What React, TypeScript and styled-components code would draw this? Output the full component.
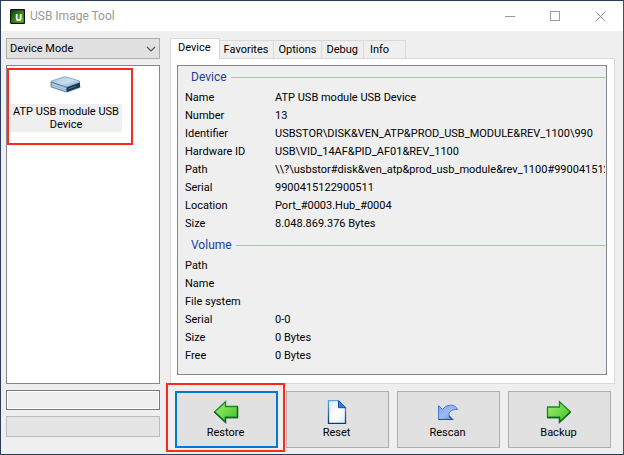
import React, { useState } from "react";
import styled, { createGlobalStyle, css } from "styled-components";

const GlobalStyle = createGlobalStyle`
  *, *::before, *::after { box-sizing: border-box; }
  body { margin: 0; background: #efefef; }
  button, input, select { font: inherit; color: inherit; margin: 0; }
`;

const Window = styled.div`
  display: flex;
  flex-direction: column;
  min-height: 100vh;
  border: 1px solid #2b3d58;
  border-right-color: #2c5676;
  background: #efefef;
  color: #000;
  font: 11px/14px Roboto, "Liberation Sans", sans-serif;
`;

const TitleBar = styled.header`
  display: flex;
  align-items: center;
  height: 30px;
  padding-left: 9px;
  background: #fff;
`;

const Title = styled.h1`
  flex: 1;
  margin: 0 0 0 5px;
  color: #999;
  font: 12px/16px Roboto, "Liberation Sans", sans-serif;
`;

const WindowButton = styled.button`
  display: grid;
  place-items: center;
  width: 45px;
  height: 30px;
  padding: 0;
  border: 0;
  background: transparent;
`;

const Body = styled.main`
  flex: 1;
  display: flex;
  gap: 10px;
  padding: 7px 8px 6px 5px;
`;

const Sidebar = styled.aside`
  display: flex;
  flex-direction: column;
  gap: 6px;
  width: 154px;
  padding-bottom: 11px;
`;

const SelectWrap = styled.div`
  display: grid;
  align-items: center;
  > * { grid-area: 1 / 1; }
  > svg { justify-self: end; margin-right: 4px; pointer-events: none; }
`;

const Select = styled.select`
  appearance: none;
  width: 100%;
  height: 21px;
  padding: 0 20px 0 3px;
  border: 1px solid #adadad;
  border-radius: 0;
  background: #e1e1e1;
`;

const DeviceList = styled.div`
  position: relative;
  flex: 1;
  padding: 10px 3px;
  border: 1px solid #828790;
  background: #fff;
`;

const DeviceItem = styled.button`
  display: flex;
  flex-direction: column;
  align-items: center;
  gap: 10px;
  width: 112px;
  padding: 0;
  border: 0;
  background: transparent;
  line-height: 13px;
`;

const DeviceName = styled.span`
  width: 100%;
  padding: 1px 0;
  background: #efefef;
`;

const Highlight = styled.span<{ $target: "device" | "action" }>`
  position: absolute;
  border: 2px solid #fb2a1c;
  pointer-events: none;
  ${({ $target }) =>
    $target === "device"
      ? css`inset: 2px 26px auto 0; height: 77px;`
      : css`inset: -8px -7px -4px -9px;`}
`;

const StatusField = styled.input`
  width: 100%;
  height: 20px;
  border: 1px solid #7a7a7a;
  border-radius: 0;
  background: #efefef;
  box-shadow: inset 0 0 0 1px #fff;
`;

const BlankButton = styled.button`
  width: 100%;
  height: 21px;
  border: 1px solid #bcbcbc;
  background: #e5e5e5;
`;

const Content = styled.section`
  flex: 1;
  min-width: 0;
  display: flex;
  flex-direction: column;
`;

const TabList = styled.div`
  display: flex;
  align-items: flex-end;
  height: 20px;
`;

const Tab = styled.button<{ $active: boolean }>`
  position: relative;
  height: 18px;
  padding: 0 5px 0 4px;
  border: 1px solid #d9d9d9;
  border-width: 1px 1px 0 0;
  background: #efefef;
  white-space: nowrap;
  &:last-child { padding: 0 16px 0 6px; }
  ${({ $active }) =>
    $active &&
    css`
      height: 21px;
      padding: 0 8px 2px 7px;
      margin-bottom: -1px;
      border-left-width: 1px;
      background: #fff;
      z-index: 1;
    `}
`;

const TabPanel = styled.div`
  flex: 1;
  display: flex;
  padding: 6px 7px 8px 6px;
  border: 1px solid #d9d9d9;
  background: #fff;
`;

const Details = styled.div`
  flex: 1;
  min-width: 0;
  padding: 2px 1px 4px 7px;
  border: 1px solid #828790;
  background: #efefef;
`;

const Group = styled.section`
  margin-bottom: 4px;
`;

const GroupTitle = styled.h2`
  display: flex;
  align-items: center;
  gap: 4px;
  height: 18px;
  margin: 0 0 2px 6px;
  color: #1a3c9f;
  font: 12px/18px Roboto, "Liberation Sans", sans-serif;
  &::after { content: ""; flex: 1; height: 1px; background: #a0b8e0; }
`;

const Properties = styled.dl`
  margin: 0;
`;

const Property = styled.div`
  display: grid;
  grid-template-columns: 90px minmax(0, 1fr);
  height: 18px;
  line-height: 20px;
  dt, dd { margin: 0; overflow: hidden; white-space: nowrap; }
`;

const Actions = styled.div`
  display: flex;
  gap: 8px;
  padding: 7px 4px 0 5px;
`;

const ActionSlot = styled.div`
  position: relative;
  flex: 1;
  display: flex;
`;

const ActionButton = styled.button<{ $primary?: boolean }>`
  flex: 1;
  display: flex;
  flex-direction: column;
  align-items: center;
  justify-content: center;
  gap: 2px;
  height: 57px;
  padding: 0 2px 0 0;
  border: ${({ $primary }) => ($primary ? "2px solid #0078d7" : "1px solid #adadad")};
  background: #e1e1e1;
`;

const AppIcon = () => (
  <svg width="15" height="15" viewBox="0 0 15 15" aria-hidden="true">
    <defs>
      <linearGradient id="app" x1="0" x2="1" y2="1">
        <stop stopColor="#083f16" />
        <stop offset="1" stopColor="#65c51c" />
      </linearGradient>
    </defs>
    <rect x=".5" y=".5" width="14" height="14" rx="1.5" fill="url(#app)" stroke="#111" strokeWidth="1.4" />
    <path d="M6.7 5v4.2q0 2 2 2t2-2V5" fill="none" stroke="#efffe5" strokeWidth="1.8" />
  </svg>
);

const DriveIcon = () => (
  <svg width="32" height="18" viewBox="0 0 32 18" aria-hidden="true">
    <defs>
      <linearGradient id="drive" x1="0" x2="1" y2="1">
        <stop stopColor="#9dbfdc" />
        <stop offset=".5" stopColor="#c9e0f2" />
        <stop offset="1" stopColor="#7fa5c7" />
      </linearGradient>
    </defs>
    <path d="M5 13l13 4 13-5V9L20 15z" fill="#b9c2ca" opacity=".6" />
    <path d="M1 5.500v5L16.500 16l13.500-4.500v-5L16.500 11z" fill="#416480" />
    <path d="M1 5.800Q1 5 3 4.500L13 1.200Q15 .7 17 1.200l12 3.600q2 .8 0 1.700l-11 4.200q-1.500.6-3 .1z" fill="url(#drive)" stroke="#6c90ae" strokeWidth=".7" />
    <path d="M1 6l15.500 5v5L1 11z" fill="#8db0cc" stroke="#4f7493" strokeWidth=".7" />
    <path d="M2 8l14 4.800M2 9.800l14 4.800" stroke="#d0e3f1" strokeWidth=".7" />
    <path d="M17 11.500L30 6.500v4.500l-13 5z" fill="#183850" />
    <path d="M18 13l8-2.800" stroke="#46718f" />
  </svg>
);

const ArrowIcon = ({ right = false }: { right?: boolean }) => (
  <svg width="26" height="24" viewBox="0 0 26 24" aria-hidden="true">
    <defs>
      <linearGradient id={right ? "arrowRight" : "arrowLeft"} x1="0" x2="1" y2="1">
        <stop stopColor="#a6ee7a" />
        <stop offset=".5" stopColor="#71d94b" />
        <stop offset="1" stopColor="#41bc20" />
      </linearGradient>
    </defs>
    <path
      d={right ? "M1.500 7h12V1.800L24.500 12 13.500 22.200V17.500h-12z" : "M24.500 6.500h-12V1.800L1.500 12l11 10.200V17.500h12z"}
      fill={right ? "url(#arrowRight)" : "url(#arrowLeft)"}
      stroke="#178a1d"
      strokeWidth="1.300"
    />
    <path
      d={right ? "M1.500 17.500h12v4.700L24.500 12" : "M1.500 12l11 10.200V17.500h12v-11"}
      fill="none"
      stroke="#0c622d"
      strokeWidth="1.300"
    />
  </svg>
);

const PageIcon = () => (
  <svg width="20" height="24" viewBox="0 0 20 24" aria-hidden="true">
    <defs>
      <linearGradient id="page" x1="0" x2="1" y2="1">
        <stop stopColor="#d9eafc" />
        <stop offset=".5" stopColor="#fff" />
        <stop offset="1" stopColor="#dcebfb" />
      </linearGradient>
      <linearGradient id="pageEdge" x2="0" y2="1">
        <stop stopColor="#63a0e5" />
        <stop offset="1" stopColor="#0b3a79" />
      </linearGradient>
    </defs>
    <path d="M1.500.7h10l7 7v15.600h-17z" fill="url(#page)" stroke="url(#pageEdge)" strokeWidth="1.300" />
    <path d="M11.500.7l7 7h-7z" fill="#2d83dc" stroke="#1453a1" />
  </svg>
);

const RescanIcon = () => (
  <svg width="22" height="24" viewBox="0 0 22 24" aria-hidden="true">
    <defs>
      <linearGradient id="rescan" x1="0" x2="1" y2="1">
        <stop stopColor="#7fa6ec" />
        <stop offset=".5" stopColor="#9bbcf2" />
        <stop offset="1" stopColor="#527bd0" />
      </linearGradient>
    </defs>
    <path
      d="M1.500 5.500v14h14L12 16c-1-4 3-7 8.500-6.500C19 5 11 2.500 5.500 9.500z"
      fill="url(#rescan)"
      stroke="#4a75cc"
    />
    <path d="M1.500 19.500h14L12 16" fill="none" stroke="#234fa6" strokeWidth="1.200" />
  </svg>
);

const deviceProperties = [
  ["Name", "ATP USB module USB Device"],
  ["Number", "13"],
  ["Identifier", "USBSTOR\\DISK&VEN_ATP&PROD_USB_MODULE&REV_1100\\990"],
  ["Hardware ID", "USB\\VID_14AF&PID_AF01&REV_1100"],
  ["Path", "\\\\?\\usbstor#disk&ven_atp&prod_usb_module&rev_1100#9900415122"],
  ["Serial", "9900415122900511"],
  ["Location", "Port_#0003.Hub_#0004"],
  ["Size", "8.048.869.376 Bytes"],
];

const volumeProperties = [
  ["Path", ""],
  ["Name", ""],
  ["File system", ""],
  ["Serial", "0-0"],
  ["Size", "0 Bytes"],
  ["Free", "0 Bytes"],
];

const PropertyGroup = ({ title, items }: { title: string; items: string[][] }) => (
  <Group>
    <GroupTitle>{title}</GroupTitle>
    <Properties>
      {items.map(([label, value]) => (
        <Property key={label}>
          <dt>{label}</dt>
          <dd>{value}</dd>
        </Property>
      ))}
    </Properties>
  </Group>
);

const tabs = ["Device", "Favorites", "Options", "Debug", "Info"];

const actions = [
  { label: "Restore", icon: <ArrowIcon />, primary: true },
  { label: "Reset", icon: <PageIcon /> },
  { label: "Rescan", icon: <RescanIcon /> },
  { label: "Backup", icon: <ArrowIcon right /> },
];

export default function App() {
  const [active, setActive] = useState("Device");
  return (
    <>
      <GlobalStyle />
      <Window>
        <TitleBar>
          <AppIcon />
          <Title>USB Image Tool</Title>
          <WindowButton aria-label="Minimize">
            <svg width="11" height="11"><path d="M0 5.500h10" stroke="#999" /></svg>
          </WindowButton>
          <WindowButton aria-label="Maximize">
            <svg width="11" height="11"><path d="M.5.500h9v9h-9z" fill="none" stroke="#999" /></svg>
          </WindowButton>
          <WindowButton aria-label="Close">
            <svg width="11" height="11"><path d="M.5.500l10 10m0-10l-10 10" stroke="#999" /></svg>
          </WindowButton>
        </TitleBar>
        <Body>
          <Sidebar>
            <SelectWrap>
              <Select aria-label="Mode" defaultValue="Device Mode">
                <option>Device Mode</option>
                <option>Volume Mode</option>
              </Select>
              <svg width="10" height="6" aria-hidden="true">
                <path d="M1 1l4 4 4-4" fill="none" stroke="#555" strokeWidth="1.200" />
              </svg>
            </SelectWrap>
            <DeviceList>
              <DeviceItem>
                <DriveIcon />
                <DeviceName>ATP USB module USB Device</DeviceName>
              </DeviceItem>
              <Highlight $target="device" />
            </DeviceList>
            <StatusField aria-label="Status" disabled />
            <BlankButton aria-label="Progress" disabled />
          </Sidebar>
          <Content>
            <TabList role="tablist">
              {tabs.map((tab) => (
                <Tab
                  key={tab}
                  role="tab"
                  aria-selected={active === tab}
                  $active={active === tab}
                  onClick={() => setActive(tab)}
                >
                  {tab}
                </Tab>
              ))}
            </TabList>
            <TabPanel role="tabpanel" aria-label={active}>
              <Details>
                <PropertyGroup title="Device" items={deviceProperties} />
                <PropertyGroup title="Volume" items={volumeProperties} />
              </Details>
            </TabPanel>
            <Actions>
              {actions.map(({ label, icon, primary }) => (
                <ActionSlot key={label}>
                  <ActionButton $primary={primary}>
                    {icon}
                    {label}
                  </ActionButton>
                  {primary && <Highlight $target="action" />}
                </ActionSlot>
              ))}
            </Actions>
          </Content>
        </Body>
      </Window>
    </>
  );
}
